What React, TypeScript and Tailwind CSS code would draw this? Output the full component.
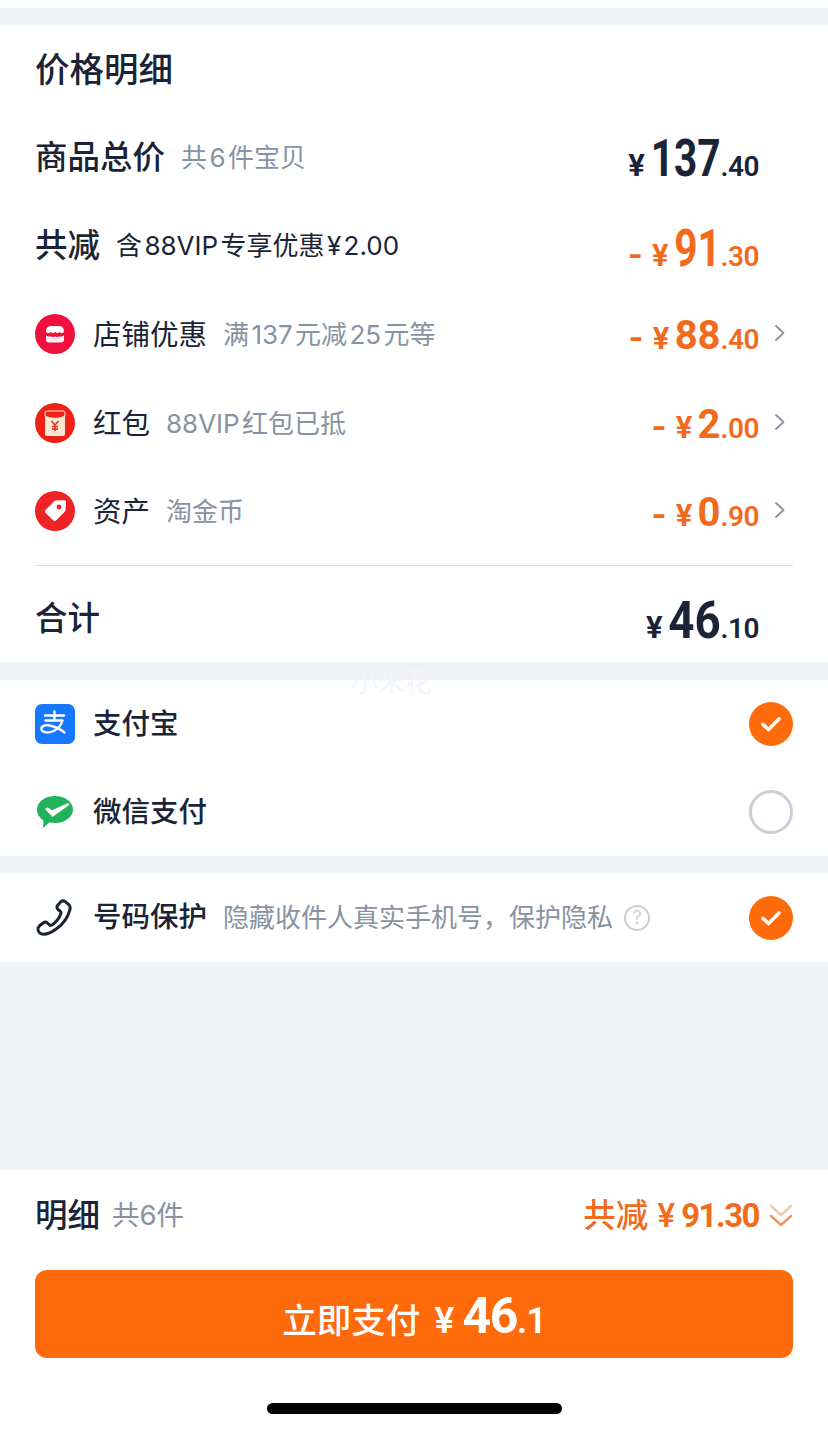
import React from 'react'

const font = "[font-family:Inter,'Noto_Sans_CJK_SC',sans-serif]"

const Chevron = () => (
  <svg width="12" height="18" viewBox="0 0 12 18" fill="none" className="absolute right-[7px] top-[12px]">
    <path d="M2 2l7.5 7L2 16" stroke="#8792a2" strokeWidth="1.8" strokeLinecap="round" strokeLinejoin="round" />
  </svg>
)

const Check = () => (
  <div className="w-11 h-11 rounded-full bg-[#ff6a0b] flex items-center justify-center">
    <svg width="22" height="18" viewBox="0 0 22 18" fill="none">
      <path d="M3 9.500l5.500 5L19 4" stroke="#fff" strokeWidth="3.6" strokeLinecap="round" strokeLinejoin="round" />
    </svg>
  </div>
)

const Price = ({ minus, int, dec, size, color }: { minus?: boolean; int: string; dec: string; size: string; color: string }) => (
  <div className={`flex items-baseline font-bold ${color}`}>
    {minus && <span className="text-[32px] mr-[9px] leading-none">-</span>}
    <span className="text-[30px] mr-[5px] leading-none font-bold">¥</span>
    <span className={`${size} leading-none font-['Roboto'] inline-block origin-right`}>{int}</span>
    <span className="text-[28px] leading-none font-['Roboto'] font-semibold tracking-[-0.5px]">.{dec}</span>
  </div>
)

const ShopIcon = () => (
  <svg width="40" height="40" viewBox="0 0 40 40">
    <circle cx="20" cy="20" r="20" fill="#f0103f" />
    <path d="M11 18c0-4 2-6 5-6h8c3 0 5 2 5 6-1.500 1.500-3 1.500-4.500 0-1.500 1.500-3 1.500-4.500 0-1.500 1.500-3 1.500-4.500 0-1.500 1.500-3 1.500-4.500 0z" fill="#fff" />
    <path d="M11 21.500c3 1.500 4.500 1 4.500 1s3 1 4.500 0c1.500 1 4.500 0 4.500 0s1.500.5 4.500-1V26c0 1.500-1 2.500-2.500 2.500h-13C12 28.500 11 27.500 11 26z" fill="#fff" opacity=".92" />
  </svg>
)

const PacketIcon = () => (
  <svg width="40" height="40" viewBox="0 0 40 40">
    <circle cx="20" cy="20" r="20" fill="#ee2119" />
    <rect x="10" y="8" width="20" height="25" rx="2" fill="#fde8d2" />
    <path d="M10 10a2 2 0 0 1 2-2h16a2 2 0 0 1 2 2v3c-6 3-14 3-20 0z" fill="#ee2119" stroke="#fde8d2" strokeWidth="1" />
    <path d="M16.500 18l3.500 4 3.500-4M20 22v6M17 23.500h6M17 26h6" stroke="#d9301f" strokeWidth="1.500" fill="none" />
  </svg>
)

const TagIcon = () => (
  <svg width="40" height="40" viewBox="0 0 40 40">
    <circle cx="20" cy="20" r="20" fill="#ee2326" />
    <path d="M21 9.500l8-.5c1.200 0 2 .8 2 2l-.5 8c0 .8-.3 1.300-.8 1.800l-8.500 8.500c-1 1-2.200 1-3.200 0l-7.300-7.300c-1-1-1-2.200 0-3.200l8.500-8.500c.5-.5 1-.8 1.800-.8z" fill="#fff" />
    <circle cx="24" cy="16" r="2.400" fill="#ee2326" />
  </svg>
)

const AlipayIcon = () => (
  <svg width="40" height="40" viewBox="0 0 40 40">
    <rect width="40" height="40" rx="7" fill="#1677ff" />
    <path d="M10 11.500h19M19.500 7.500v8M10.500 16.500h17c-1.500 5-5 9-10 11-4 1.500-10 1.500-11-2-.8-3.500 4-5 8-4 5 1 11 4 15 7" stroke="#fff" strokeWidth="2.400" fill="none" strokeLinecap="round" strokeLinejoin="round" />
  </svg>
)

const WechatIcon = () => (
  <svg width="40" height="40" viewBox="0 0 40 40">
    <path d="M20 4c10 0 18 6 18 13.500S30 31 20 31c-2 0-3.800-.2-5.500-.7L8 36l.5-7.500C4.500 26 2 22 2 17.500 2 10 10 4 20 4z" fill="#1fb45a" />
    <path d="M10 17l2.500-1.800 4.500 3L33 11l1.500 1.800L17.500 25z" fill="#fff" />
  </svg>
)

const PhoneIcon = () => (
  <svg width="40" height="40" viewBox="0 0 40 40" fill="none">
    <path d="M26 3.500c1.500-1 3-.8 4.500.3l3 2.500c1.500 1.300 2 3 1.500 5-2 8-6.500 14.500-13.500 19.500-4 3-9 5.500-13 5.500-3 0-5-2-5.500-4.500-.3-1.700.3-3 1.500-4l4-3c1.300-1 2.800-.9 4 .2l2 2c.5.500 1.200.6 2 .2 4-2.500 8-7.500 9.500-12 .3-.9 0-1.500-.7-2l-2-1.500c-1.300-1-1.700-2.500-1-4z" stroke="#1a2436" strokeWidth="3" strokeLinejoin="round" />
  </svg>
)

const rowText = "text-[28.5px] leading-none text-[#1a2436]"
const grey = "text-[26px] leading-none text-[#8792a2]"

const DiscountRow = ({ icon, name, note, price }: { icon: React.ReactNode; name: string; note: string; price: React.ReactNode }) => (
  <div className="h-[88.500px] flex items-center justify-between">
    <div className="flex items-center">
      <div className="w-10 h-10 mr-[18px]">{icon}</div>
      <span className={`${rowText} mt-[2px]`}>{name}</span>
      <span className={`${grey} ml-4 mt-[2px]`}>{note}</span>
    </div>
    <div className="relative pr-[34px] pt-1">
      {price}
      <Chevron />
    </div>
  </div>
)

export default function App() {
  const orange = 'text-[#f26b1d]'
  const navy = 'text-[#1a2436]'
  return (
    <div className={`relative w-[828px] h-[1431px] bg-[#f0f3f6] flex flex-col overflow-hidden ${font}`}>
      <div className="h-2 bg-white" />
      <div className="mt-[17px] h-[637px] bg-white px-[35px]">
        <div className="h-[89px] flex items-center pt-[2px]">
          <span className={`text-[34.500px] leading-none font-medium ${navy}`}>价格明细</span>
        </div>

        <div className="h-[88px] flex items-center justify-between">
          <div className="flex items-center">
            <span className={`text-[32.500px] leading-none font-medium ${navy}`}>商品总价</span>
            <span className={`${grey} ml-4`}>共{'\u200a'}6{'\u200a'}件宝贝</span>
          </div>
          <div className="pr-[34px] pt-[1px]">
            <Price int="137" dec="40" size="text-[52px] scale-x-[0.78] -ml-[19px]" color={navy} />
          </div>
        </div>

        <div className="h-[88px] flex items-center justify-between">
          <div className="flex items-center">
            <span className={`text-[32.500px] leading-none font-medium ${navy}`}>共减</span>
            <span className={`text-[26px] leading-none ${navy} ml-4`}>含{'\u200a'}88VIP{'\u200a'}专享优惠{'\u200a'}¥{'\u200a'}2.00</span>
          </div>
          <div className="pr-[34px] pt-[5px]">
            <Price minus int="91" dec="30" size="text-[52px] scale-x-[0.78] -ml-[13px]" color={orange} />
          </div>
        </div>

        <DiscountRow icon={<ShopIcon />} name="店铺优惠" note={'满\u200a137\u200a元减\u200a25\u200a元等'} price={<Price minus int="88" dec="40" size="text-[40px]" color={orange} />} />
        <DiscountRow icon={<PacketIcon />} name="红包" note={'88VIP\u200a红包已抵'} price={<Price minus int="2" dec="00" size="text-[40px]" color={orange} />} />
        <DiscountRow icon={<TagIcon />} name="资产" note="淘金币" price={<Price minus int="0" dec="90" size="text-[40px]" color={orange} />} />

        <div className="h-px bg-[#dfe3e8] mt-[9px]" />

        <div className="h-[97px] flex items-center justify-between">
          <span className={`text-[32.500px] leading-none font-medium mt-[10px] ${navy}`}>合计</span>
          <div className="pr-[34px] pt-[14px]">
            <Price int="46" dec="10" size="text-[52px] scale-x-[0.88] -ml-[7px]" color={navy} />
          </div>
        </div>
      </div>

      <div className="mt-[18px] h-[176px] bg-white px-[35px] flex flex-col">
        <div className="h-[88px] flex items-center justify-between">
          <div className="flex items-center">
            <div className="w-10 h-10 mr-[18px]"><AlipayIcon /></div>
            <span className={`${rowText} font-medium`}>支付宝</span>
          </div>
          <Check />
        </div>
        <div className="h-[88px] flex items-center justify-between">
          <div className="flex items-center">
            <div className="w-10 h-10 mr-[18px]"><WechatIcon /></div>
            <span className={`${rowText} font-medium`}>微信支付</span>
          </div>
          <div className="w-11 h-11 rounded-full border-[3px] border-[#c9cfd8]" />
        </div>
      </div>

      <div className="mt-[17px] h-[89px] bg-white px-[35px] flex items-center justify-between">
        <div className="flex items-center">
          <div className="w-10 h-10 mr-[18px]"><PhoneIcon /></div>
          <span className={`${rowText} font-medium`}>号码保护</span>
          <span className={`${grey} ml-4`}>隐藏收件人真实手机号，保护隐私</span>
          <span className="ml-[11px] w-[26px] h-[26px] rounded-full border-2 border-[#c9cfd8] text-[#c9cfd8] text-[18px] leading-none flex items-center justify-center">?</span>
        </div>
        <Check />
      </div>

      <div className="mt-[208px] flex-1 bg-white px-[35px] flex flex-col">
        <div className="h-[92px] flex items-center justify-between">
          <div className="flex items-center">
            <span className={`text-[32.500px] leading-none font-medium ${navy}`}>明细</span>
            <span className="text-[27.500px] leading-none text-[#8792a2] ml-3">共6件</span>
          </div>
          <div className={`flex items-baseline ${orange}`}>
            <span className="text-[32.500px] leading-none font-medium">共减</span>
            <span className="text-[32px] leading-none font-semibold ml-[9px]">¥</span>
            <span className="text-[33px] leading-none font-bold font-['Roboto'] tracking-[-1.5px] ml-[6px]">91.30</span>
            <svg width="24" height="28" viewBox="0 0 24 28" fill="none" className="ml-[10px] self-center">
              <path d="M2 4l10 9 10-9" stroke="#f3c6ae" strokeWidth="2.400" strokeLinecap="round" strokeLinejoin="round" />
              <path d="M2 14l10 9 10-9" stroke="#f0935f" strokeWidth="2.400" strokeLinecap="round" strokeLinejoin="round" />
            </svg>
          </div>
        </div>
        <button className="mt-2 h-[88px] rounded-xl bg-[#ff6a0b] text-white flex items-baseline justify-center pt-[21px]">
          <span className="text-[34.500px] leading-none font-medium">立即支付</span>
          <span className="text-[36px] leading-none font-semibold ml-[14px]">¥</span>
          <span className="text-[50px] leading-none font-bold font-['Roboto'] tracking-[-1.5px] ml-[8px]">46</span>
          <span className="text-[36px] leading-none font-semibold font-['Roboto'] tracking-[-1px]">.1</span>
        </button>
        <div className="mt-[45px] mx-auto w-[295px] h-[11px] rounded-full bg-black" />
      </div>

      <div className="absolute left-[351px] top-[669px] text-[27px] leading-none text-[#f4f6f8]">小米花</div>
    </div>
  )
}
